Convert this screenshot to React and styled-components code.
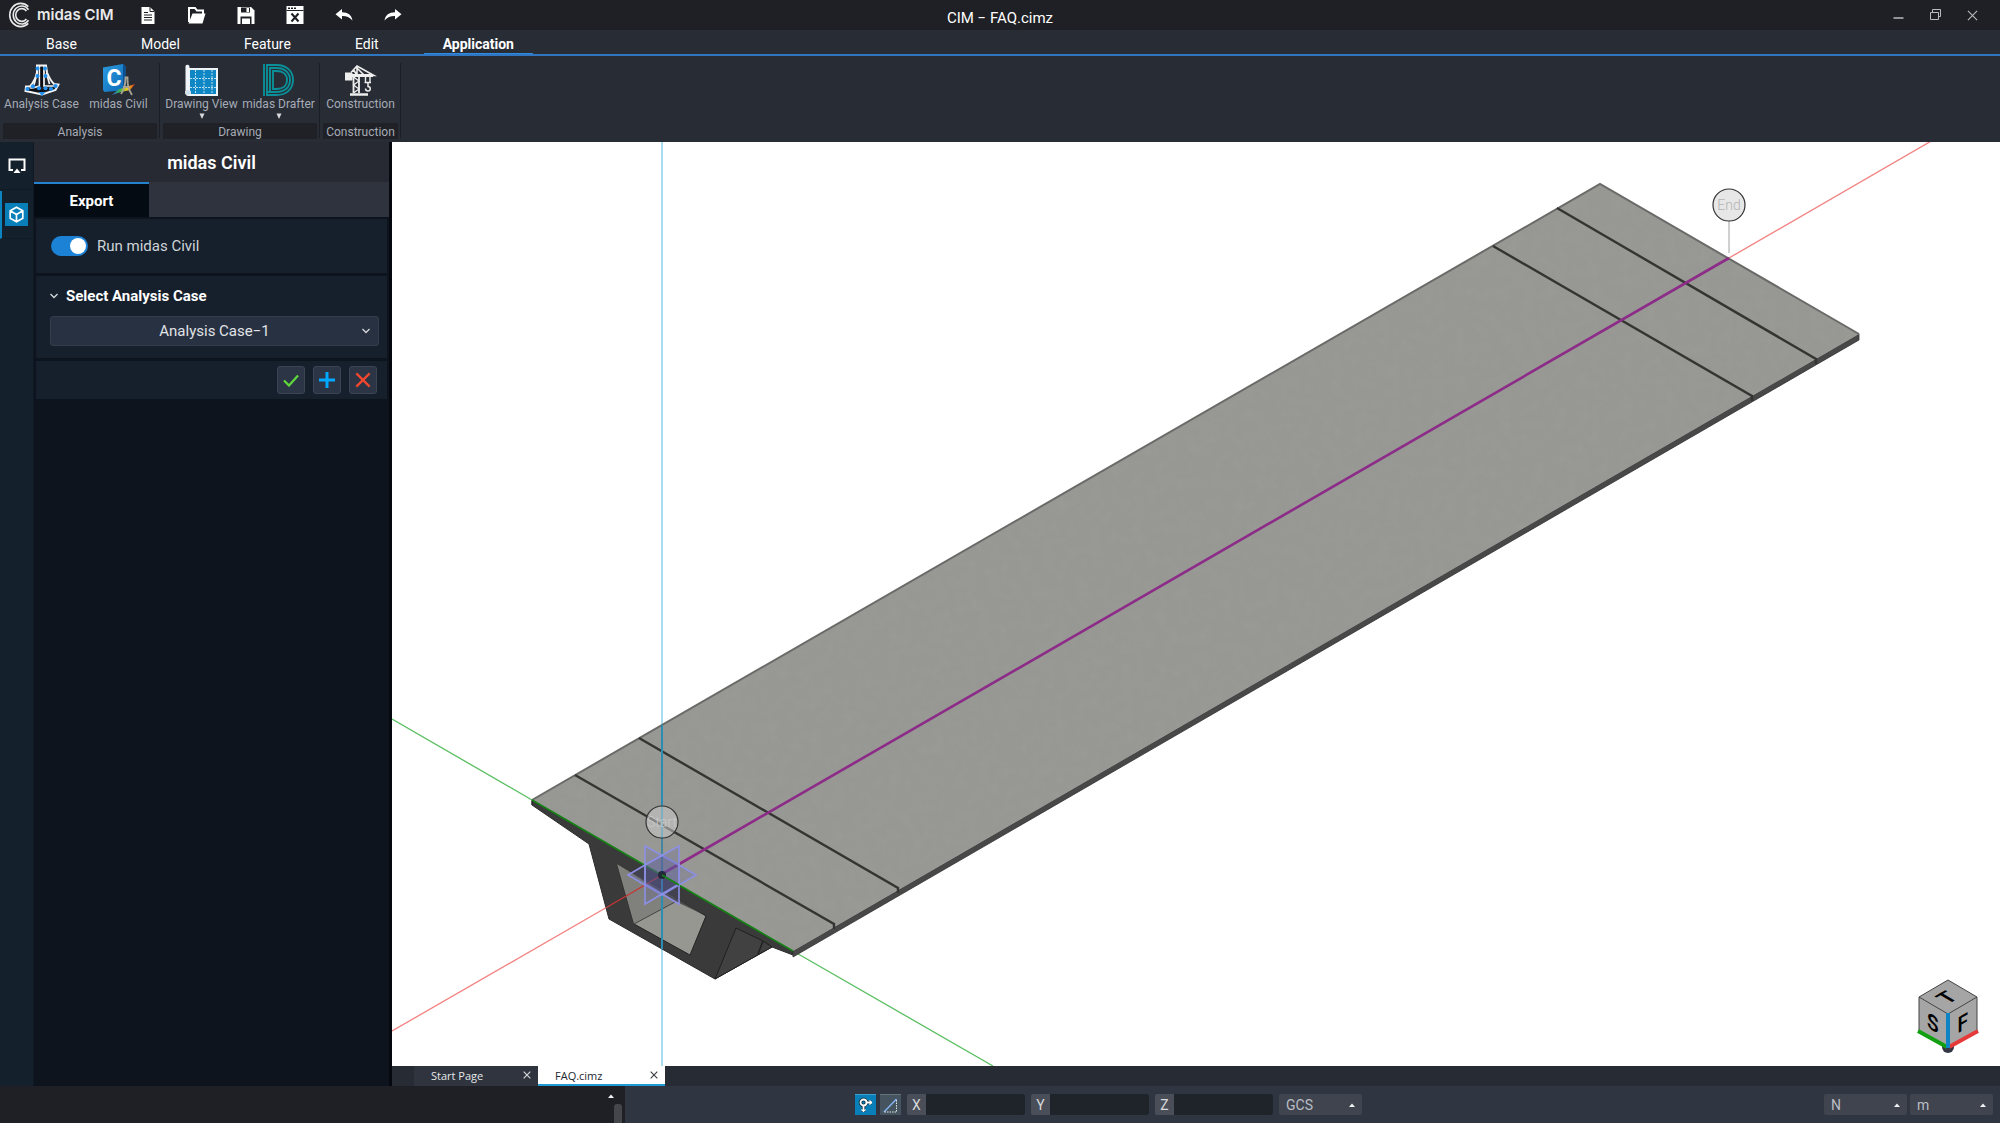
import React, { useState } from 'react';
import styled, { createGlobalStyle } from 'styled-components';

const GlobalStyle = createGlobalStyle`
  * {
    box-sizing: border-box;
  }

  body {
    margin: 0;
    background: #1f2025;
    font-family: Roboto, 'Liberation Sans', sans-serif;
    font-size: 14px;
    color: #fff;
  }

  button,
  input,
  select {
    margin: 0;
    padding: 0;
    border: 0;
    background: none;
    font: inherit;
    color: inherit;
  }

  svg {
    display: block;
  }
`;

const Window = styled.div`
  display: flex;
  flex-direction: column;
  height: 100vh;
  overflow: hidden;
`;

const TitleBar = styled.header`
  display: grid;
  grid-template-columns: 1fr auto 1fr;
  align-items: center;
  flex: none;
  height: 30px;
  background: #1f2025;
`;

const Row = styled.div`
  display: flex;
  align-items: center;
`;

const Brand = styled.div`
  display: flex;
  align-items: center;
  gap: 5px;
  width: 123px;
  padding-left: 7px;
  font-family: Inter, sans-serif;
  font-size: 15px;
  font-weight: 600;
  line-height: 30px;
  color: #e9e9ea;
  white-space: nowrap;
`;

const QuickButton = styled.button`
  display: flex;
  align-items: center;
  justify-content: center;
  width: 49px;
  height: 30px;
`;

const Title = styled.h1`
  margin: 0;
  padding-top: 6px;
  font-size: 15px;
  font-weight: 400;
  line-height: 20px;
`;

const WindowControls = styled.div`
  display: flex;
  justify-content: flex-end;
  padding-right: 9px;
`;

const WindowButton = styled.button`
  display: flex;
  align-items: center;
  justify-content: center;
  width: 37px;
  height: 28px;
`;

const MenuTabs = styled.nav`
  display: flex;
  flex: none;
  gap: 26px;
  height: 26px;
  padding-left: 27px;
  background: #282c35;
  border-bottom: 2px solid #2f75c0;
`;

const MenuTab = styled.button`
  padding: 0 19px;
  border-bottom: 1px solid ${props => (props.$active ? '#2f8be0' : 'transparent')};
  font-weight: ${props => (props.$active ? 700 : 400)};
  line-height: 28px;
`;

const Ribbon = styled.div`
  display: flex;
  flex: none;
  height: 86px;
  background: #282c35;
`;

const Group = styled.section`
  padding: 8px 2px 0 3px;
`;

const Divider = styled.div`
  width: 1px;
  margin: 7px 0 4px;
  background: #1b1e25;
`;

const Tool = styled.button`
  display: inline-flex;
  flex-direction: column;
  align-items: center;
  width: ${props => props.$width || 77}px;
  height: 59px;
  font-size: 12px;
  line-height: 16px;
  color: #a6abb5;
  white-space: nowrap;
`;

const ToolArrow = styled.span`
  display: flex;
  align-items: center;
  height: 8px;
`;

const Caption = styled.div`
  height: 16px;
  background: #1f2127;
  font-size: 12px;
  line-height: 18px;
  text-align: center;
  color: #a6abb5;
`;

const Workspace = styled.main`
  display: flex;
  flex: 1;
  min-height: 0;
`;

const Rail = styled.nav`
  display: flex;
  flex-direction: column;
  flex: none;
  gap: 1px;
  width: 34px;
  background: #14202b;
  border-right: 1px solid #101923;
`;

const RailButton = styled.button`
  display: flex;
  align-items: center;
  justify-content: center;
  width: 33px;
  height: 48px;
  padding-right: ${props => (props.$active ? 2 : 0)}px;
  border-left: ${props => (props.$active ? 2 : 0)}px solid #0b84bf;
  border-bottom: 1px solid #111b25;
`;

const RailBadge = styled.span`
  display: flex;
  align-items: center;
  justify-content: center;
  width: 23px;
  height: 23px;
  background: ${props => (props.$active ? '#087fb9' : 'none')};
`;

const Panel = styled.aside`
  flex: none;
  width: 358px;
  background: #0d141e;
  border-right: 3px solid #05080e;
`;

const PanelTitle = styled.h2`
  height: 40px;
  margin: 0;
  background: #272a32;
  font-size: 18px;
  font-weight: 600;
  line-height: 42px;
  text-align: center;
`;

const PanelTabs = styled.div`
  display: flex;
  height: 35px;
  background: #2e333e;
`;

const PanelTab = styled.button`
  width: 115px;
  background: #050b12;
  border-top: 2px solid #2582cf;
  font-size: 15px;
  font-weight: 700;
`;

const PanelBody = styled.div`
  display: flex;
  flex-direction: column;
  gap: 3px;
  padding: 2px;
`;

const Section = styled.section`
  padding: ${props => props.$pad || '0 10px 0 15px'};
  background: #15202c;
`;

const SwitchRow = styled.label`
  display: flex;
  align-items: center;
  gap: 9px;
  height: 54px;
  font-size: 15px;
  color: #cfd3d8;
`;

const Switch = styled.input`
  display: flex;
  align-items: center;
  justify-content: ${props => (props.checked ? 'flex-end' : 'flex-start')};
  appearance: none;
  width: 37px;
  height: 20px;
  padding: 0 2px;
  border-radius: 10px;
  background: ${props => (props.checked ? '#1c82d6' : '#3a4351')};

  &::after {
    content: '';
    width: 16px;
    height: 16px;
    border-radius: 50%;
    background: #fff;
  }
`;

const SectionHead = styled.button`
  display: flex;
  align-items: center;
  gap: 8px;
  height: 40px;
  font-size: 15px;
  font-weight: 700;
`;

const SelectBox = styled.div`
  position: relative;

  svg {
    position: absolute;
    top: 0;
    bottom: 0;
    right: ${props => props.$inset || 6}px;
    margin: auto;
    pointer-events: none;
  }
`;

const CaseSelect = styled.select`
  appearance: none;
  display: block;
  width: 100%;
  height: 30px;
  border: 1px solid #343d4c;
  border-radius: 3px;
  background: #283141;
  font-size: 15px;
  text-align: center;
  color: #e0e3e7;
`;

const Actions = styled.div`
  display: flex;
  align-items: center;
  justify-content: flex-end;
  gap: 8px;
  height: 38px;
`;

const ActionButton = styled.button`
  display: flex;
  align-items: center;
  justify-content: center;
  width: 28px;
  height: 28px;
  border: 1px solid #3b4454;
  border-radius: 3px;
  background: #2c3545;
`;

const ViewColumn = styled.div`
  display: flex;
  flex: 1;
  flex-direction: column;
  min-width: 0;
`;

const Viewport = styled.div`
  flex: 1;
  min-height: 0;
  background: #fff;

  svg {
    width: 100%;
    height: 100%;
  }
`;

const DocTabs = styled.div`
  display: flex;
  flex: none;
  height: 20px;
  padding-left: 22px;
  background: #272b34;
  font-family: 'Open Sans', 'Noto Sans', sans-serif;
  font-size: 11px;
`;

const DocTab = styled.div`
  display: flex;
  align-items: center;
  justify-content: space-between;
  width: ${props => (props.$active ? 127 : 124)}px;
  padding: 0 7px 0 17px;
  background: ${props => (props.$active ? '#fff' : '#2f343f')};
  border-bottom: 2px solid ${props => (props.$active ? '#1e9ad6' : '#2f343f')};
  color: ${props => (props.$active ? '#23262d' : '#e6e8ea')};
  font-weight: 500;
`;

const StatusBar = styled.footer`
  display: flex;
  flex: none;
  height: 37px;
  background: #303641;
`;

const Console = styled.div`
  display: flex;
  flex-direction: column;
  align-items: flex-end;
  width: 625px;
  padding: 8px 3px 0 0;
  background: #1f2025;
`;

const ConsoleArrow = styled.button`
  width: 22px;
  height: 8px;
  display: flex;
  justify-content: center;
`;

const ConsoleThumb = styled.div`
  flex: 1;
  width: 8px;
  margin-top: 2px;
  border-radius: 3px 3px 0 0;
  background: #45464a;
`;

const Coordinates = styled.form`
  display: flex;
  align-items: center;
  gap: 6px;
  margin-left: 230px;
`;

const SnapGroup = styled.div`
  display: flex;
  gap: 4px;
`;

const SnapButton = styled.button`
  display: flex;
  align-items: center;
  justify-content: center;
  width: 21px;
  height: 21px;
  background: ${props => (props.$active ? '#087fb9' : '#45545f')};
  border-top: 1px solid ${props => (props.$active ? '#3fa0cc' : '#64727b')};
`;

const Field = styled.label`
  display: flex;
  height: 21px;
  border-radius: 2px;
  background: #4a4e58;
  line-height: 22px;
  color: #d7d9dc;
  overflow: hidden;

  span {
    width: 19px;
    text-align: center;
  }

  input {
    width: 99px;
    background: #1f232a;
  }
`;

const UnitSelect = styled.select`
  appearance: none;
  display: block;
  width: 83px;
  height: 21px;
  padding-left: 7px;
  border-radius: 2px;
  background: #40444e;
  color: #b9bec6;
`;

const Units = styled.div`
  display: flex;
  align-items: center;
  gap: 3px;
  margin-left: auto;
  padding-right: 7px;
`;

/* ---------- icons ---------- */

const LogoIcon = () => (
  <svg width="25" height="26" viewBox="0 0 25 26" fill="none" stroke="#e9e9ea" strokeWidth="1.6">
    <path d="M21.300 4.600A11 11.600 0 1 0 21.300 21.400" />
    <path d="M21.500 7.800A8.400 9 0 1 0 21.500 18.200" />
    <path d="M19.400 9A6 6.400 0 1 0 19.400 17" />
  </svg>
);

const FileIcon = () => (
  <svg width="14" height="17" viewBox="0 0 14 17">
    <path d="M0.500 0H9l4.500 4.500V17H0.500z" fill="#fff" />
    <path d="M9 0v4.500h4.500" fill="none" stroke="#1f2025" />
    <path d="M3 5.500h4M3 8h8M3 10.500h8M3 13h8" stroke="#1f2025" strokeWidth="1.100" />
  </svg>
);

const FolderIcon = () => (
  <svg width="18" height="17" viewBox="0 0 18 17">
    <path d="M1 15V1h6l2 2.500h6V7" fill="none" stroke="#fff" strokeWidth="2" />
    <path d="M0.500 16.500 4.500 6.500h13l-3 10z" fill="#fff" />
  </svg>
);

const SaveIcon = () => (
  <svg width="18" height="17" viewBox="0 0 18 17">
    <path d="M0.500 0H14l3.500 3.500V17H0.500z" fill="#fff" />
    <path d="M4 0.500h9v5H4zM3.500 9.500h11V17h-11z" fill="#1f2025" />
    <path d="M9.500 1h2.500v4H9.500zM5 11.500h8V17H5z" fill="#fff" />
  </svg>
);

const CloseFileIcon = () => (
  <svg width="18" height="18" viewBox="0 0 18 18">
    <path d="M0.500 0h17v18H0.500z" fill="#fff" />
    <path d="M0.500 4.500h17" stroke="#1f2025" />
    <path d="M2 2.200h2M5 2.200h2M8 2.200h2" stroke="#1f2025" strokeWidth="1.500" />
    <path d="m5.500 7.500 7 8M12.500 7.500l-7 8" stroke="#1f2025" strokeWidth="2" />
  </svg>
);

const UndoIcon = () => (
  <svg width="18" height="12" viewBox="0 0 18 12">
    <path d="M7 0v3.300c6 0 9.500 2.700 10.500 8.200C14.500 8 11.500 6.900 7 7v3.500L0.500 5.200z" fill="#fff" />
  </svg>
);

const RedoIcon = () => (
  <svg width="18" height="12" viewBox="0 0 18 12">
    <path d="M11 0v3.300C5 3.300 1.500 6 0.500 11.500 3.500 8 6.500 6.900 11 7v3.500l6.500-5.300z" fill="#fff" />
  </svg>
);

const MinimizeIcon = () => (
  <svg width="12" height="12" viewBox="0 0 12 12">
    <path d="M0.500 9h10" stroke="#b9babc" strokeWidth="1.500" />
  </svg>
);

const RestoreIcon = () => (
  <svg width="12" height="12" viewBox="0 0 12 12" fill="none" stroke="#b9babc">
    <path d="M0.500 3.500h8v7h-8zM2.500 3.500v-3h8v7h-2" />
  </svg>
);

const CrossIcon = ({ size = 11, color = '#b9babc', width = 1.2 }) => (
  <svg width={size} height={size} viewBox="0 0 12 12">
    <path d="m1 1 10 10M11 1 1 11" stroke={color} strokeWidth={width} />
  </svg>
);

const CaseIcon = () => (
  <svg width="36" height="32" viewBox="0 0 36 32" fill="none">
    <path d="M13 1.500h9l1 7c2 5 4.500 9 7 11.500l4.500.5-3 5.500L18 30.500 1.500 27 2 22.500h4c3.500-4 6-9 7-14z" fill="#20242c" stroke="#f4f4f4" strokeWidth="2" />
    <path d="M15.500 2v20L6 24.500M20 2v20l10 0M13 9 10 21M22.500 9l3 11" stroke="#f4f4f4" strokeWidth="1.700" />
    <path d="M17.700 3v20" stroke="#0c0e13" strokeWidth="2.600" />
    <path d="M5 25.500 17 27l12-2.500" stroke="#0c0e13" strokeWidth="2.200" />
    <g fill="#2390ef">
      <circle cx="13.500" cy="4.500" r="2" />
      <circle cx="21" cy="4.500" r="2" />
      <circle cx="13.500" cy="12" r="2" />
      <circle cx="21.500" cy="12" r="2" />
      <circle cx="3.500" cy="25" r="2.100" />
      <circle cx="9" cy="22.300" r="2.100" />
      <circle cx="15" cy="24.300" r="2" />
      <circle cx="21.500" cy="24.300" r="2" />
      <circle cx="27" cy="25" r="2.100" />
      <circle cx="31.500" cy="22" r="2.100" />
      <path d="M14.500 28h7L18 32z" />
    </g>
  </svg>
);

const CivilIcon = () => (
  <svg width="36" height="32" viewBox="0 0 36 32">
    <defs>
      <linearGradient id="civil" x1="0" y1="0" x2="1" y2="1">
        <stop offset="0" stopColor="#2b9be0" />
        <stop offset="1" stopColor="#0d68b8" />
      </linearGradient>
      <linearGradient id="spectrum">
        <stop offset="0" stopColor="#2d62d8" />
        <stop offset="0.350" stopColor="#35b24a" />
        <stop offset="0.650" stopColor="#f5d21a" />
        <stop offset="1" stopColor="#e03020" />
      </linearGradient>
    </defs>
    <path d="M2 3.500 22 0l2.500 2.500V26L3.500 28 2 26z" fill="url(#civil)" />
    <path d="m22 0 2.500 2.500V26L22 23z" fill="#0b4f90" />
    <text x="5.500" y="22" fontFamily="Roboto" fontSize="23" fontWeight="700" fill="#fff">C</text>
    <path d="m11 31 6-5.500 8-2.500 9-3-5 6-9 2z" fill="url(#spectrum)" />
    <path d="M20 30c3-4 4.500-9 4.500-16.500h2C26.500 21 27 25 31 31M22 23h6" fill="none" stroke="#a9a394" strokeWidth="1.800" />
  </svg>
);

const DrawingIcon = () => (
  <svg width="34" height="32" viewBox="0 0 34 32">
    <path d="M4 5h28v26H4z" fill="#0f87c4" stroke="#eef4f8" strokeWidth="2" />
    <path d="M0.500 3C0 0.500 4 0 4.500 2.500V26h-1C1 26 0.500 28 0.500 29z" fill="#eef4f8" />
    <path d="M0.500 28.500c0-3.500 5-3.500 5 0 0 4-5 4-5 0z" fill="#cfe0ea" stroke="#eef4f8" />
    <path d="M10.500 6v24M19 6v24M27 6v24M5 14.500h26M5 23.500h26" stroke="#b9e0f2" strokeDasharray="2 1" />
  </svg>
);

const DrafterIcon = () => (
  <svg width="32" height="32" viewBox="0 0 32 32" fill="none" stroke="#0b8f98" strokeWidth="1.900">
    <path d="M1 0v32M4 0v32" />
    <path d="M4 1h9.500C23.500 1 30 7 30 16s-6.500 15-16.500 15H4" />
    <path d="M7 28V4h6.500C21.500 4 27 8.500 27 16s-5.500 12-13.500 12H4" />
    <path d="M10 25V7h3.500C19.500 7 24 10 24 16s-4.500 9-10.500 9z" />
  </svg>
);

const CraneIcon = () => (
  <svg width="32" height="32" viewBox="0 0 32 32" fill="none" stroke="#eee">
    <path d="M0 9h7v7H0z" fill="#eee" />
    <path d="M6 8.500 12 2l17 9.500H8M12 2v9M12 4l7 7M8.500 5.500l3.500 6" strokeWidth="1.600" />
    <path d="M28 10v3H7v-3z" fill="#eee" stroke="none" />
    <path d="M8.500 12v17M14 12v17" strokeWidth="1.800" />
    <path d="m8.500 13 5.500 4-5.500 4 5.500 4-5.500 4" strokeWidth="1.300" />
    <path d="M5 30.500h18" strokeWidth="2.500" />
    <path d="M20.500 13v5M25 13v5M19.500 18.500h6.500" strokeWidth="1.400" />
    <path d="M23 19v3.500c3 0 3 4.500 0 4.500-1.500 0-2.500-1-2.500-2.500" strokeWidth="1.500" />
  </svg>
);

const DownArrow = () => (
  <svg width="6" height="6" viewBox="0 0 6 6">
    <path d="M0.500 0.500h5L3 6z" fill="#d8dadd" />
  </svg>
);

const UpArrow = () => (
  <svg width="6" height="4" viewBox="0 0 6 4">
    <path d="M0 4h6L3 0.500z" fill="#f0f1f2" />
  </svg>
);

const Chevron = () => (
  <svg width="8" height="6" viewBox="0 0 8 6" fill="none" stroke="#d5d8dc" strokeWidth="1.300">
    <path d="m0.500 1 3.500 3.500L7.500 1" />
  </svg>
);

const ScreenIcon = () => (
  <svg width="18" height="16" viewBox="0 0 18 16">
    <path d="M5 12H1.500V1.500h15V12H13" fill="none" stroke="#fff" strokeWidth="2" />
    <path d="M9 10.500 12.500 15h-7z" fill="#fff" />
  </svg>
);

const BoxIcon = () => (
  <svg width="17" height="17" viewBox="0 0 17 17" fill="none" stroke="#fff" strokeWidth="1.700">
    <path d="m8.500 1.200 6.300 3.600v7.400l-6.300 3.600-6.300-3.600V4.800zM2.200 4.800l6.300 3.600 6.300-3.600M8.500 8.400v7.400" />
  </svg>
);

const CheckIcon = () => (
  <svg width="16" height="13" viewBox="0 0 16 13" fill="none" stroke="#5fd83a" strokeWidth="2.200">
    <path d="m1 6.500 5 5L15 1.500" />
  </svg>
);

const PlusIcon = () => (
  <svg width="16" height="16" viewBox="0 0 16 16" stroke="#00a8ff" strokeWidth="3">
    <path d="M8 0v16M0 8h16" />
  </svg>
);

const SnapIcon = () => (
  <svg width="17" height="17" viewBox="0 0 17 17" fill="none">
    <g stroke="#16242e" strokeWidth="3.500">
      <circle cx="6.500" cy="5.500" r="3" />
      <path d="M9.500 5.500H15M6.500 8.500V15" />
    </g>
    <g stroke="#fff" strokeWidth="1.800">
      <circle cx="6.500" cy="5.500" r="3" />
      <path d="M9.500 5.500H15M6.500 8.500V14" />
      <path d="m12.500 3.500 2 2-2 2" strokeWidth="1.200" />
      <path d="m4.500 12.500 2 2 2-2" strokeWidth="1.200" />
    </g>
  </svg>
);

const SlopeIcon = () => (
  <svg width="15" height="15" viewBox="0 0 15 15" fill="none">
    <path d="M1 14 13.500 1" stroke="#84b3f0" strokeWidth="1.500" />
    <path d="M13.500 2v12H1" stroke="#dfe4e8" strokeDasharray="1.500 1" />
  </svg>
);

/* ---------- 3D view ---------- */

const DECK = '532,800 1600,184 1859,334 793,951';

const SEAMS = [
  [575, 775, 834, 924],
  [639, 738, 898, 888],
  [1493, 246, 1752, 396],
  [1557, 208, 1816, 359],
];

const CUBE_FACES = [
  { label: 'T', matrix: 'matrix(0.866 -0.5 0.866 0.5 1917 997)' },
  { label: 'S', matrix: 'matrix(0.866 0.5 0 1 1918 997)' },
  { label: 'F', matrix: 'matrix(0.866 -0.5 0 1 1948 1014)' },
];

const Marker = ({ x, y, label, stem, ink }) => (
  <g>
    <path d={`M${x} ${y + 16}v${stem}`} stroke="#777" strokeOpacity="0.700" />
    <circle cx={x} cy={y} r="16" fill="#d0d0d0" fillOpacity="0.500" stroke="#333" strokeWidth="1.200" />
    <text x={x} y={y + 5} textAnchor="middle" fontSize="14" fontWeight="300" fill={ink}>
      {label}
    </text>
  </g>
);

const ViewCube = () => (
  <g>
    <circle cx="1948" cy="1047" r="6" fill="#333844" />
    <path d="m1948 980 29 17v34l-29 17-29-17v-34z" fill="#a5a5a5" />
    <path d="m1948 980 29 17v34M1919 1031v-34l29-17M1919 997l29 17 29-17" fill="none" stroke="#444" />
    {CUBE_FACES.map(face => (
      <text
        key={face.label}
        transform={face.matrix}
        x="17"
        y="25"
        textAnchor="middle"
        fontSize="22"
        fontWeight="600"
        fill="#000"
      >
        {face.label}
      </text>
    ))}
    <path d="m1918 1031 29 16" stroke="#12a012" strokeWidth="4" />
    <path d="m1949 1047 29-16" stroke="#e63a3a" strokeWidth="4" />
    <path d="M1948 1013v35" stroke="#0d85c4" strokeWidth="4" />
  </g>
);

const Scene = () => (
  <svg viewBox="392 142 1608 924" preserveAspectRatio="xMidYMid slice" role="img" aria-label="Bridge model">
    <defs>
      <filter id="concrete" x="0" y="0" width="1" height="1">
        <feTurbulence type="fractalNoise" baseFrequency="0.090" numOctaves="4" seed="4" />
        <feColorMatrix values="0 0 0 0 0.350  0 0 0 0 0.340  0 0 0 0 0.330  1.300 0 0 0 -0.500" />
        <feComposite in2="SourceGraphic" operator="in" />
      </filter>
    </defs>

    <path d="M392 719 532 800M793 951l200 115" stroke="#2fae3a" strokeOpacity="0.800" strokeWidth="1.300" />
    <path d="M1729 258 1933 140" stroke="#ee4a4a" strokeOpacity="0.700" strokeWidth="1.300" />
    <path d="M662 142v924" stroke="#a9dcf0" strokeWidth="2" />

    {/* box girder below the deck */}
    <path d="M532 800 793 951v4l-21-8-57 32-106-60-20-75-57-39z" fill="#3a3a3a" stroke="#2b2b2b" />
    <path d="m736 928 27 13 9 6-57 32z" fill="#414141" stroke="#202020" />
    <path d="m763 941-5 13" stroke="#202020" strokeWidth="1.500" />
    <path d="m617 864 89 52-16 39-56-31z" fill="#979791" stroke="#232323" />
    <path d="m617 864 17 60 41-22v-4z" fill="#80807c" />
    <path d="m634 924 41-22" stroke="#444" />
    <path d="m617 864 89 52-31-15z" fill="#4c4c4a" />

    {/* deck */}
    <path d="M793 951 1859 334v6L793 957z" fill="#484848" stroke="#333" strokeWidth="0.800" />
    <polygon points={DECK} fill="#979893" />
    <polygon points={DECK} fill="#979893" filter="url(#concrete)" opacity="0.500" />
    <path d="M532 800 1600 184l259 150" fill="none" stroke="#6a6a68" strokeWidth="2" />
    {SEAMS.map(([x1, y1, x2, y2]) => (
      <path key={x1} d={`M${x1} ${y1} ${x2} ${y2}v5`} fill="none" stroke="#343432" strokeWidth="2.400" />
    ))}
    <path d="m532 800 261 151" stroke="#148214" strokeWidth="1.600" />
    <path d="M532 801v4" stroke="#222" />

    {/* axes and alignment */}
    <path d="M662 725v224" stroke="#2b8db4" strokeWidth="2" />
    <path d="M392 1031 609 906" stroke="#ee4a4a" strokeOpacity="0.700" strokeWidth="1.300" />
    <path d="M609 906 662 875" stroke="#c83434" strokeWidth="1.300" />
    <path d="M662 874 1729 258" stroke="#8c2c88" strokeWidth="2.600" />

    <Marker x={662} y={822} label="Start" stem={32} ink="#c8c8c8" />
    <Marker x={1729} y={205} label="End" stem={32} ink="#b4b4b4" />

    {/* work planes */}
    <g fill="#5a5a9a" fillOpacity="0.220" stroke="#8c90e4" strokeWidth="1.600">
      <path d="m628 875 34-20 34 20-34 20z" />
      <path d="m645 846 34 19v39l-34-20z" />
      <path d="m679 846-34 19v39l34-20z" />
    </g>
    <circle cx="662" cy="875" r="4" fill="#22283a" />
    <path d="m662 875 17 10" stroke="#148214" strokeWidth="1.500" />

    <ViewCube />
  </svg>
);

/* ---------- page ---------- */

const QUICK_ACTIONS = [
  ['New', FileIcon],
  ['Open', FolderIcon],
  ['Save', SaveIcon],
  ['Close', CloseFileIcon],
  ['Undo', UndoIcon],
  ['Redo', RedoIcon],
];

const MENUS = ['Base', 'Model', 'Feature', 'Edit', 'Application'];

const RIBBON = [
  {
    caption: 'Analysis',
    tools: [
      { label: 'Analysis Case', Icon: CaseIcon },
      { label: 'midas Civil', Icon: CivilIcon },
    ],
  },
  {
    caption: 'Drawing',
    tools: [
      { label: 'Drawing View', Icon: DrawingIcon, menu: true },
      { label: 'midas Drafter', Icon: DrafterIcon, menu: true },
    ],
  },
  {
    caption: 'Construction',
    tools: [{ label: 'Construction', Icon: CraneIcon, width: 75 }],
  },
];

const Unit = ({ label, value }) => (
  <SelectBox $inset={7}>
    <UnitSelect aria-label={label} defaultValue={value}>
      <option>{value}</option>
    </UnitSelect>
    <UpArrow />
  </SelectBox>
);

export default function App() {
  const [menu, setMenu] = useState('Application');
  const [runCivil, setRunCivil] = useState(true);

  return (
    <Window>
      <GlobalStyle />
      <TitleBar>
        <Row>
          <Brand>
            <LogoIcon />
            midas CIM
          </Brand>
          {QUICK_ACTIONS.map(([label, Icon]) => (
            <QuickButton key={label} aria-label={label}>
              <Icon />
            </QuickButton>
          ))}
        </Row>
        <Title>CIM − FAQ.cimz</Title>
        <WindowControls>
          <WindowButton aria-label="Minimize">
            <MinimizeIcon />
          </WindowButton>
          <WindowButton aria-label="Restore">
            <RestoreIcon />
          </WindowButton>
          <WindowButton aria-label="Exit">
            <CrossIcon />
          </WindowButton>
        </WindowControls>
      </TitleBar>

      <MenuTabs>
        {MENUS.map(name => (
          <MenuTab key={name} $active={name === menu} onClick={() => setMenu(name)}>
            {name}
          </MenuTab>
        ))}
      </MenuTabs>

      <Ribbon>
        {RIBBON.map(group => (
          <React.Fragment key={group.caption}>
            <Group>
              <Row>
                {group.tools.map(({ label, Icon, width, menu: hasMenu }) => (
                  <Tool key={label} $width={width}>
                    <Icon />
                    {label}
                    {hasMenu && (
                      <ToolArrow>
                        <DownArrow />
                      </ToolArrow>
                    )}
                  </Tool>
                ))}
              </Row>
              <Caption>{group.caption}</Caption>
            </Group>
            <Divider />
          </React.Fragment>
        ))}
      </Ribbon>

      <Workspace>
        <Rail>
          <RailButton aria-label="Display">
            <RailBadge>
              <ScreenIcon />
            </RailBadge>
          </RailButton>
          <RailButton aria-label="Model" $active>
            <RailBadge $active>
              <BoxIcon />
            </RailBadge>
          </RailButton>
        </Rail>

        <Panel>
          <PanelTitle>midas Civil</PanelTitle>
          <PanelTabs>
            <PanelTab>Export</PanelTab>
          </PanelTabs>
          <PanelBody>
            <Section>
              <SwitchRow>
                <Switch
                  type="checkbox"
                  role="switch"
                  checked={runCivil}
                  onChange={e => setRunCivil(e.target.checked)}
                />
                Run midas Civil
              </SwitchRow>
            </Section>
            <Section $pad="0 8px 12px 14px">
              <SectionHead>
                <Chevron />
                Select Analysis Case
              </SectionHead>
              <SelectBox $inset={9}>
                <CaseSelect aria-label="Analysis case" defaultValue="Analysis Case−1">
                  <option>Analysis Case−1</option>
                </CaseSelect>
                <Chevron />
              </SelectBox>
            </Section>
            <Section>
              <Actions>
                <ActionButton aria-label="Apply">
                  <CheckIcon />
                </ActionButton>
                <ActionButton aria-label="Add">
                  <PlusIcon />
                </ActionButton>
                <ActionButton aria-label="Cancel">
                  <CrossIcon size={16} color="#f4472f" width={1.7} />
                </ActionButton>
              </Actions>
            </Section>
          </PanelBody>
        </Panel>

        <ViewColumn>
          <Viewport>
            <Scene />
          </Viewport>
          <DocTabs>
            <DocTab>
              <button>Start Page</button>
              <button aria-label="Close Start Page">
                <CrossIcon size={8} color="#d5d7da" width={1.7} />
              </button>
            </DocTab>
            <DocTab $active>
              <button>FAQ.cimz</button>
              <button aria-label="Close FAQ.cimz">
                <CrossIcon size={8} color="#3a3d44" width={1.7} />
              </button>
            </DocTab>
          </DocTabs>
        </ViewColumn>
      </Workspace>

      <StatusBar>
        <Console>
          <ConsoleArrow aria-label="Scroll up">
            <UpArrow />
          </ConsoleArrow>
          <ConsoleThumb />
        </Console>
        <Coordinates>
          <SnapGroup>
            <SnapButton type="button" aria-label="Snap" $active>
              <SnapIcon />
            </SnapButton>
            <SnapButton type="button" aria-label="Relative">
              <SlopeIcon />
            </SnapButton>
          </SnapGroup>
          {['X', 'Y', 'Z'].map(axis => (
            <Field key={axis}>
              <span>{axis}</span>
              <input type="text" />
            </Field>
          ))}
          <Unit label="Coordinate system" value="GCS" />
        </Coordinates>
        <Units>
          <Unit label="Force" value="N" />
          <Unit label="Length" value="m" />
        </Units>
      </StatusBar>
    </Window>
  );
}
